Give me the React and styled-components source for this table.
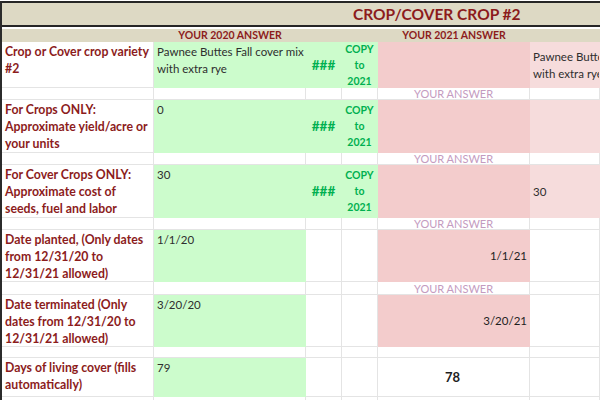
import React from "react";
import styled, { createGlobalStyle } from "styled-components";

const Global = createGlobalStyle`
  html, body { margin: 0; padding: 0; background: #fff; }
  body { font-family: Lato, "Liberation Sans", sans-serif; }
  * { box-sizing: border-box; }
`;

const COLS = "152px 152px 36px 36px 152px 1fr";
const GRID = "#e4e4e4";
const RED = "#8c1c1c";
const GREEN_FILL = "#ccfccc";
const PINK = "#f3cccc";
const PINK_LIGHT = "#f6dcdc";
const GREEN_TEXT = "#00b050";

const Page = styled.div`
  width: 600px;
  height: 400px;
  overflow: hidden;
  padding-top: 1px;
  background: #fff;
`;

const Framed = styled.div`
  border-left: 2px solid #2b2b2b;
`;

const TitleBand = styled.div`
  height: 26px;
  background: #ddd9c4;
  border-top: 2px solid #262626;
  border-bottom: 2px solid #262626;
  display: flex;
  align-items: center;
  padding-left: 351px;
  color: ${RED};
  font-weight: 700;
  font-size: 15.5px;
  white-space: nowrap;
`;

const SubHeader = styled.div`
  margin-top: 2px;
  height: 13px;
  background: #ddd9c4;
  display: grid;
  grid-template-columns: ${COLS};
  align-items: center;
`;

const SubTitle = styled.div`
  grid-column: ${(p) => p.$col};
  text-align: center;
  color: ${RED};
  font-weight: 700;
  font-size: 10.5px;
  line-height: 13px;
`;

const Sheet = styled.div`
  display: grid;
  grid-template-columns: ${COLS};
  grid-template-rows: ${(p) => p.$rows};
`;

const BaseCell = styled.div`
  border-right: 1px solid ${(p) => (p.$fill ? "transparent" : GRID)};
  border-bottom: 1px solid ${(p) => (p.$fill ? "transparent" : GRID)};
  background: ${(p) => p.$fill || "#fff"};
  overflow: hidden;
  white-space: nowrap;
`;

const LabelCell = styled(BaseCell)`
  color: ${RED};
  font-weight: 700;
  font-size: 12.3px;
  line-height: 17px;
  padding: 1px 0 0 3px;
`;

const EntryCell = styled(BaseCell)`
  color: #2e2e2e;
  font-size: 11.5px;
  line-height: 17px;
  padding: 1px 0 0 3px;
`;

const HashCell = styled(BaseCell)`
  display: flex;
  align-items: center;
  justify-content: center;
  color: ${GREEN_TEXT};
  font-weight: 700;
  font-size: 13.5px;
`;

const CopyCell = styled(BaseCell)`
  display: flex;
  flex-direction: column;
  align-items: center;
  justify-content: center;
  color: ${GREEN_TEXT};
  font-weight: 700;
  font-size: 10.5px;
  line-height: 16px;
`;

const AnswerCell = styled(BaseCell)`
  display: flex;
  align-items: center;
  justify-content: ${(p) => p.$justify || "flex-end"};
  padding: 0 2px 0 0;
  color: #1e1e1e;
  font-size: ${(p) => (p.$bold ? "13px" : "11.5px")};
  font-weight: ${(p) => (p.$bold ? 700 : 400)};
`;

const SideCell = styled(BaseCell)`
  display: flex;
  flex-direction: column;
  justify-content: center;
  padding-left: 3px;
  color: #2e2e2e;
  font-size: 11.5px;
  line-height: 17px;
`;

const GapCell = styled(BaseCell)`
  display: flex;
  align-items: center;
  justify-content: center;
  color: #c49bbf;
  font-size: 11px;
  line-height: 11px;
`;

const Lines = ({ lines }) =>
  lines.map((l, i) => (
    <React.Fragment key={i}>
      {l}
      {i < lines.length - 1 && <br />}
    </React.Fragment>
  ));

const rows = [
  {
    h: 46,
    label: ["Crop or Cover crop variety", "#2"],
    entry: ["Pawnee Buttes Fall cover mix", "with extra rye"],
    copy: true,
    answer: "",
    sideFill: true,
    side: ["Pawnee Buttes Fall cover mix", "with extra rye"],
    gap: 12,
    gapText: true,
  },
  {
    h: 53,
    label: ["For Crops ONLY:", "Approximate yield/acre or", "your units"],
    entry: ["0"],
    copy: true,
    answer: "",
    sideFill: true,
    side: [],
    gap: 12,
    gapText: true,
  },
  {
    h: 53,
    label: ["For Cover Crops ONLY:", "Approximate cost of", "seeds, fuel and labor"],
    entry: ["30"],
    copy: true,
    answer: "",
    sideFill: true,
    side: ["30"],
    gap: 12,
    gapText: true,
  },
  {
    h: 52,
    label: ["Date planted, (Only dates", "from 12/31/20 to", "12/31/21 allowed)"],
    entry: ["1/1/20"],
    copy: false,
    answer: "1/1/21",
    sideFill: false,
    side: [],
    gap: 13,
    gapText: true,
  },
  {
    h: 52,
    label: ["Date terminated (Only", "dates from 12/31/20 to", "12/31/21 allowed)"],
    entry: ["3/20/20"],
    copy: false,
    answer: "3/20/21",
    sideFill: false,
    side: [],
    gap: 11,
    gapText: false,
  },
  {
    h: 39,
    label: ["Days of living cover (fills", "automatically)"],
    entry: ["79"],
    copy: false,
    total: "78",
    sideFill: false,
    side: [],
    gap: 20,
    gapText: false,
  },
];

export default function App() {
  const template = rows.map((r) => `${r.h}px ${r.gap}px`).join(" ");
  return (
    <Page>
      <Global />
      <Framed>
        <TitleBand>CROP/COVER CROP #2</TitleBand>
        <SubHeader>
          <SubTitle $col={2}>YOUR 2020 ANSWER</SubTitle>
          <SubTitle $col={5}>YOUR 2021 ANSWER</SubTitle>
        </SubHeader>
        <Sheet $rows={template}>
          {rows.map((r, i) => (
            <React.Fragment key={i}>
              <LabelCell>
                <Lines lines={r.label} />
              </LabelCell>
              <EntryCell $fill={GREEN_FILL}>
                <Lines lines={r.entry} />
              </EntryCell>
              {r.copy ? (
                <>
                  <HashCell $fill={GREEN_FILL}>###</HashCell>
                  <CopyCell $fill={GREEN_FILL}>
                    <span>COPY</span>
                    <span>to</span>
                    <span>2021</span>
                  </CopyCell>
                </>
              ) : (
                <>
                  <HashCell />
                  <CopyCell />
                </>
              )}
              {r.total ? (
                <AnswerCell $justify="center" $bold>
                  {r.total}
                </AnswerCell>
              ) : (
                <AnswerCell $fill={PINK}>{r.answer}</AnswerCell>
              )}
              <SideCell $fill={r.sideFill ? PINK_LIGHT : undefined}>
                {r.side.map((s, k) => (
                  <span key={k}>{s}</span>
                ))}
              </SideCell>
              <GapCell />
              <GapCell />
              <GapCell />
              <GapCell />
              <GapCell>{r.gapText ? "YOUR ANSWER" : ""}</GapCell>
              <GapCell />
            </React.Fragment>
          ))}
        </Sheet>
      </Framed>
    </Page>
  );
}
